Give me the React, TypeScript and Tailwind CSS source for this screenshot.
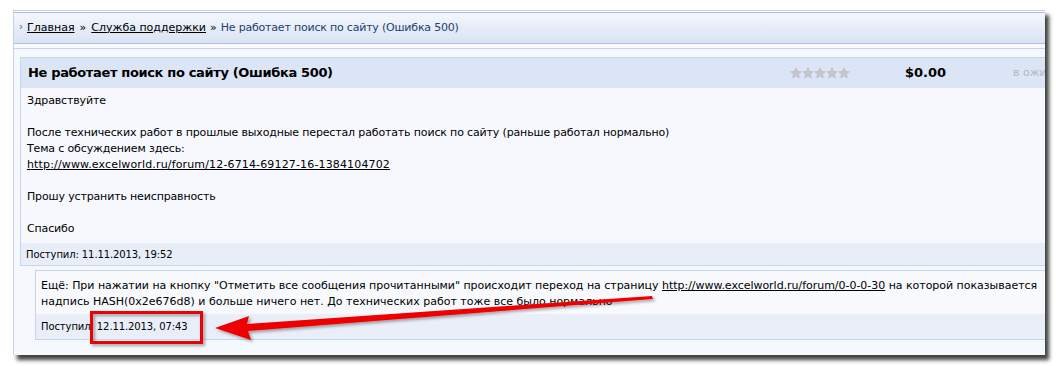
import React from "react";

const Star = () => (
  <svg width="12" height="12" viewBox="0 0 24 24">
    <path
      d="M12 1.5l3.1 7.1 7.6.7-5.8 5 1.8 7.5L12 17.8l-6.7 4 1.8-7.5-5.8-5 7.6-.7z"
      fill="#c4c6cb"
      stroke="#b3b5ba"
      strokeWidth="1"
    />
  </svg>
);

export default function App() {
  const font = { fontFamily: "'DejaVu Sans', 'Noto Sans', sans-serif" };
  return (
    <div className="relative w-[1056px] h-[366px] bg-white overflow-hidden pt-[10px] pl-[13px]" style={font}>
      <div className="w-[1032px] h-[345px] bg-[#f9fafd] border-l border-t border-[#c9d2de] shadow-[4px_5px_4px_rgba(0,0,0,0.75)] overflow-hidden">
        <div className="w-[1100px]">
          {/* breadcrumb */}
          <div className="h-[32px] mt-[1px] border-y border-[#a9c1ea] bg-gradient-to-b from-[#f4f7fc] to-[#d9e3f3] flex items-center pl-[5px] text-[11px] text-black">
            <span className="text-[#3a5a9a] text-[10px] mr-[4px] -mt-[3px]">›</span>
            <span className="underline">Главная</span>
            <span className="mx-[5px]">»</span>
            <span className="underline">Служба поддержки</span>
            <span className="mx-[4px]">»</span>
            <span className="text-[#24406f] tracking-[-0.2px]">Не работает поиск по сайту (Ошибка 500)</span>
          </div>
          {/* panel */}
          <div className="mt-[4px] border-t border-[#c5d3ec] bg-[#f5f8fd] pl-[6px] pt-[8px] h-[320px]">
            {/* post */}
            <div className="border border-[#c6d4ee] bg-[#f6f8fd]">
              <div className="h-[30px] bg-[#dbe5f5] flex items-center pl-[7px]">
                <div className="w-[762px] text-[13px] font-bold text-black tracking-[-0.35px]">Не работает поиск по сайту (Ошибка 500)</div>
                <div className="flex gap-0 w-[115px]">
                  <Star />
                  <Star />
                  <Star />
                  <Star />
                  <Star />
                </div>
                <div className="w-[108px] text-[13px] font-bold text-black">$0.00</div>
                <div className="text-[11px] text-[#b4b8c0]">в ожидании</div>
              </div>
              <div className="px-[6px] pt-[5px] pb-[6px] text-[11px] leading-[16px] text-black tracking-[-0.15px]">
                <div>Здравствуйте</div>
                <div className="h-[16px]" />
                <div>После технических работ в прошлые выходные перестал работать поиск по сайту (раньше работал нормально)</div>
                <div>Тема с обсуждением здесь:</div>
                <div className="underline tracking-[0.15px]">http://www.excelworld.ru/forum/12-6714-69127-16-1384104702</div>
                <div className="h-[16px]" />
                <div>Прошу устранить неисправность</div>
                <div className="h-[16px]" />
                <div>Спасибо</div>
              </div>
              <div className="h-[22px] bg-[#e8eef8] flex items-center pl-[5px] text-[10px] text-black tracking-[-0.1px]">
                Поступил: 11.11.2013, 19:52
              </div>
            </div>
            {/* reply */}
            <div className="ml-[15px] mt-[4px] border border-[#c6d4ee] bg-[#f7f9fd]">
              <div className="px-[5px] pt-[7px] pb-[4px] text-[11px] leading-[16px] text-black">
                <div className="tracking-[-0.03px]">
                  Ещё: При нажатии на кнопку "Отметить все сообщения прочитанными" происходит переход на страницу{" "}
                  <span className="underline">http://www.excelworld.ru/forum/0-0-0-30</span> на которой показывается
                </div>
                <div>надпись HASH(0x2e676d8) и больше ничего нет. До технических работ тоже все было нормально</div>
              </div>
              <div className="h-[25px] bg-[#e9eef8] flex items-center pl-[5px] text-[10px] text-black tracking-[-0.1px]">
                Поступил: 12.11.2013, 07:43
              </div>
            </div>
          </div>
        </div>
      </div>
      {/* annotation */}
      <svg className="absolute left-0 top-0" width="1056" height="366" viewBox="0 0 1056 366">
        <defs>
          <filter id="sh" x="-10%" y="-50%" width="120%" height="200%">
            <feDropShadow dx="2" dy="2" stdDeviation="1.5" floodColor="#000" floodOpacity="0.35" />
          </filter>
        </defs>
        <g filter="url(#sh)">
          <rect x="91.5" y="312.5" width="110" height="30" fill="none" stroke="#ee0000" strokeWidth="3" />
          <polygon
            points="215,328 249,316 247,324 652,296 653,299 248,331 251,340"
            fill="#ee0000"
          />
        </g>
      </svg>
    </div>
  );
}
